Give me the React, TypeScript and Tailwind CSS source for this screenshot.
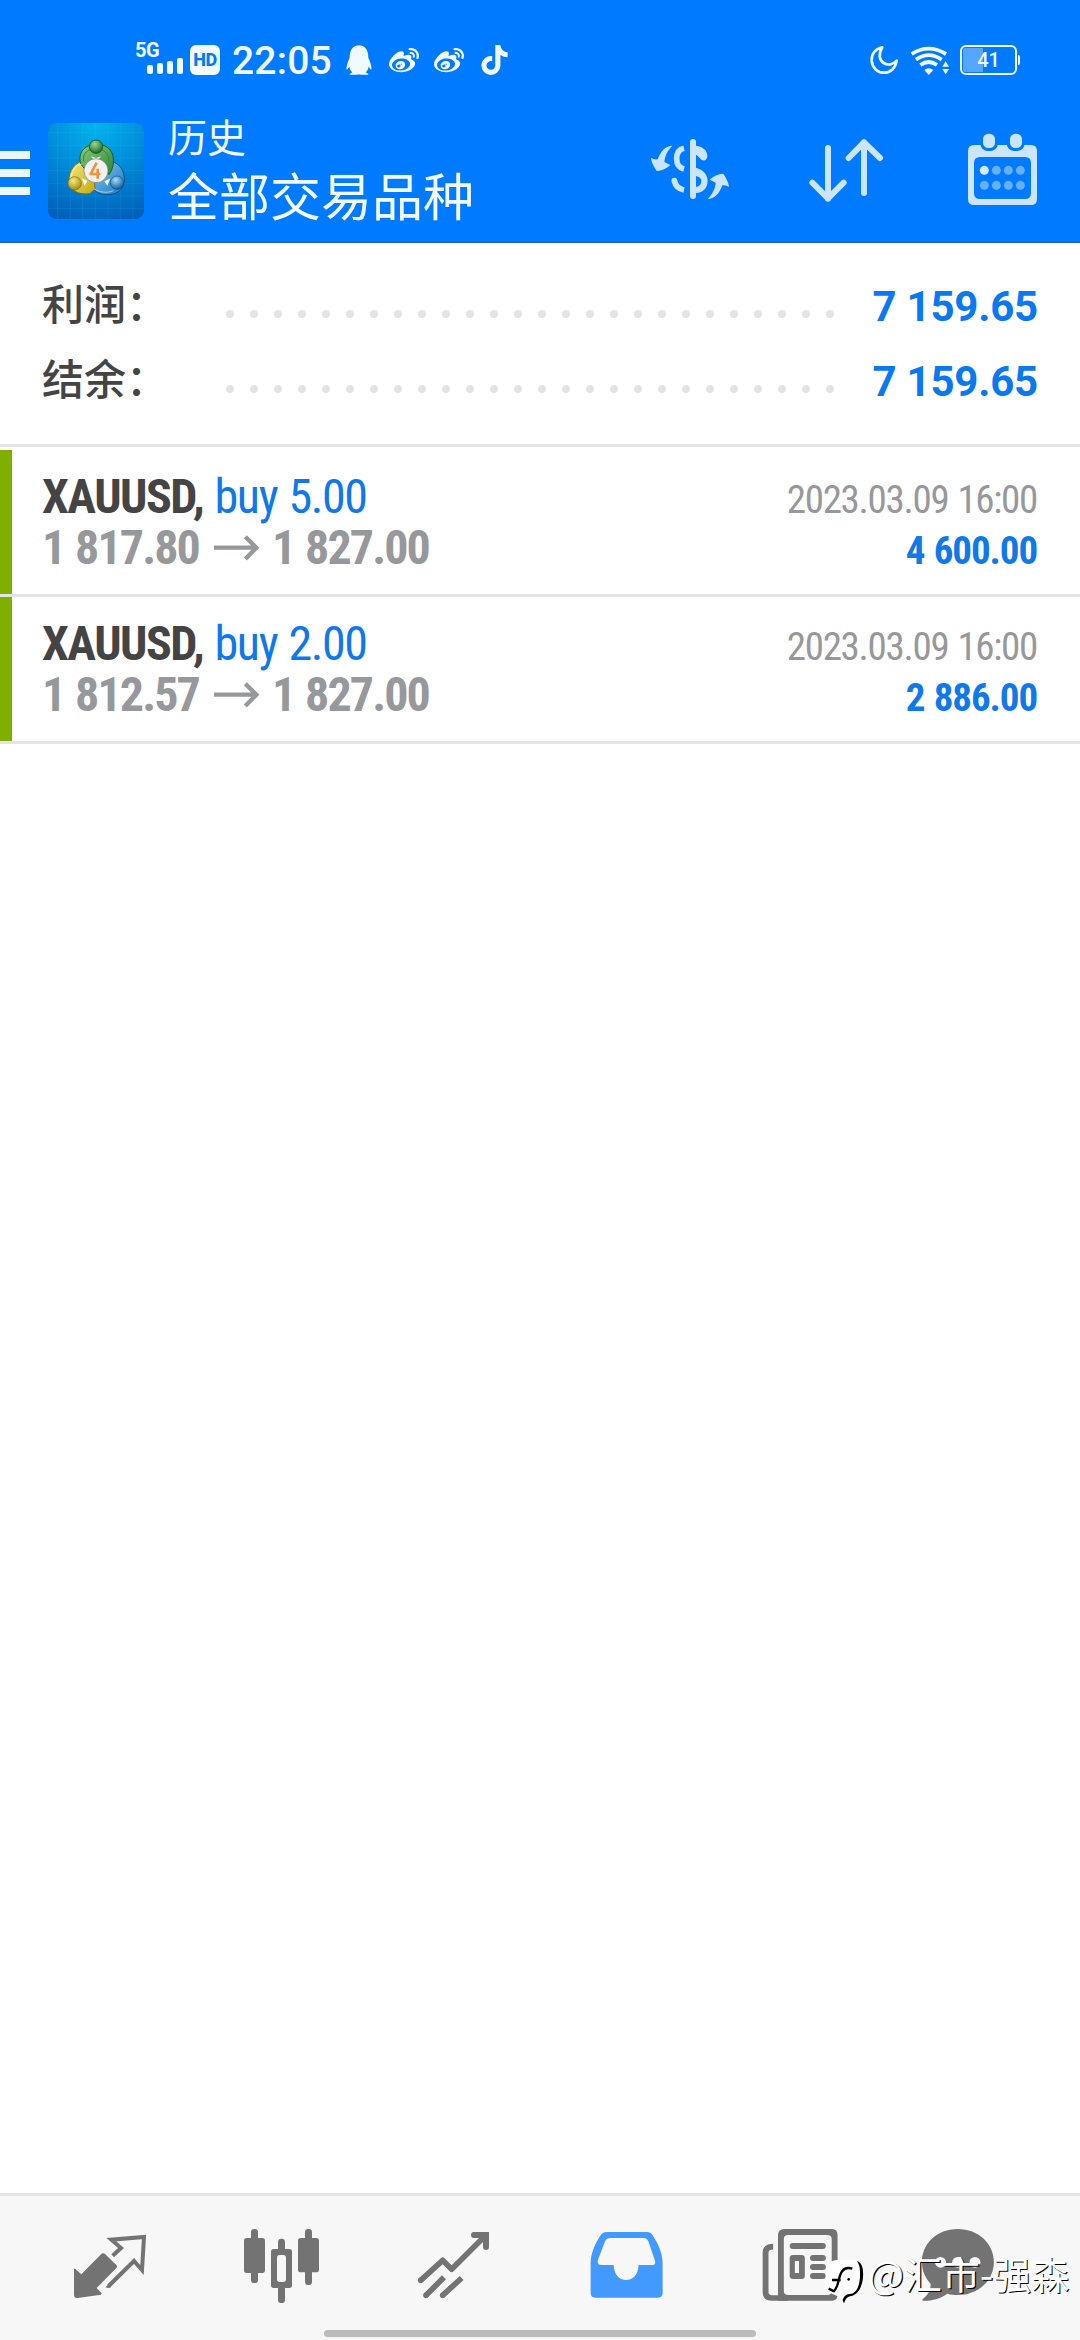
import type { ReactNode } from 'react';
import { FaQq, FaTiktok, FaWeibo } from 'react-icons/fa';

const CJK = "font-['Noto_Sans_CJK_SC',sans-serif]";
const CONDENSED = "font-['Roboto_Condensed',Roboto,sans-serif]";

function StatusBar() {
  return (
    <div className="flex h-[102px] items-start pt-[42px] pr-[60px] pl-[135px] text-[#f0faff]">
      <div className="flex h-8 w-[48px] flex-col">
        <span className="text-[20px] leading-[16px] font-bold tracking-[-0.5px]">5G</span>
        <div className="flex h-4 items-end justify-end gap-[4px]">
          <i className="h-[9px] w-[6px] rounded-[2px] bg-[#f0faff]" />
          <i className="h-[11px] w-[6px] rounded-[2px] bg-[#f0faff]" />
          <i className="h-[13px] w-[6px] rounded-[2px] bg-[#f0faff]" />
          <i className="h-[16px] w-[6px] rounded-[2px] bg-[#f0faff]" />
        </div>
      </div>
      <span className="mt-[3px] ml-[7px] flex h-[30px] w-[30px] items-center justify-center rounded-[6px] bg-[#f0faff] text-[18px] leading-none font-extrabold tracking-[-0.5px] text-[#007aff]">
        HD
      </span>
      <span className="ml-[12px] w-[102px] text-[39px] leading-[38px] font-medium tracking-[0.2px] whitespace-nowrap">22:05</span>
      <FaQq className="mt-[3px] ml-[12px] h-[30px] w-[26px]" />
      <FaWeibo className="mt-[4px] ml-[17px] h-[30px] w-[30px]" />
      <FaWeibo className="mt-[4px] ml-[15px] h-[30px] w-[30px]" />
      <FaTiktok className="mt-[3px] ml-[17px] h-[30px] w-[27px]" />

      <svg className="mt-[3px] ml-auto h-[30px] w-[30px]" viewBox="90 75 90 90" fill="none" stroke="currentColor" strokeWidth="8" strokeLinejoin="round">
        <path d="M127 82 C105 87 94 103 95 122 C97 144 112 158 132 158 C152 158 167 144 170 122 C160 134 144 137 131 129 C117 120 115 101 127 82Z" />
      </svg>
      <svg className="mt-[3px] ml-[10px] h-[30px] w-[40px]" viewBox="208 75 120 90" fill="none" stroke="currentColor" strokeWidth="11.5">
        <path d="M213 102 Q264 70 316 102" />
        <path d="M226 119 Q264 92 303 119" />
        <path d="M239 135 Q264 117 289 135" />
        <path d="M251 150 Q264 140 278 150 L264 165Z" fill="currentColor" stroke="none" />
        <path d="M315 124 L325 140 H305Z M315 163 L325 147 H305Z" fill="currentColor" stroke="none" />
      </svg>
      <div className="mt-[3px] ml-[10px] flex items-center">
        <div className="relative flex h-[30px] w-[57px] items-center justify-center rounded-[6px] border-[2.5px] border-[#f0faff]">
          <i className="absolute top-[1px] bottom-[1px] left-[1px] w-[20px] rounded-l-[2px] bg-[#55a6ff]" />
          <span className="relative text-[20px] leading-none font-medium">41</span>
        </div>
        <i className="ml-px h-[10px] w-[2px] rounded-r bg-[#f0faff]" />
      </div>
    </div>
  );
}

function AppLogo() {
  return (
    <svg className="mt-[21px] ml-[18px] h-24 w-24 shrink-0" viewBox="12 15 288 288">
      <defs>
        <radialGradient id="sky" cx="0.5" cy="0" r="1.05">
          <stop offset="0" stopColor="#00b6ee" />
          <stop offset="0.45" stopColor="#0090dc" />
          <stop offset="1" stopColor="#0060ba" />
        </radialGradient>
        <linearGradient id="green" x1="0" y1="0" x2="1" y2="1">
          <stop offset="0" stopColor="#8ccc7c" />
          <stop offset="1" stopColor="#2a8536" />
        </linearGradient>
        <linearGradient id="gold" x1="0" y1="0" x2="1" y2="1">
          <stop offset="0" stopColor="#f3ec7c" />
          <stop offset="1" stopColor="#c4a813" />
        </linearGradient>
        <linearGradient id="azure" x1="0" y1="0" x2="1" y2="1">
          <stop offset="0" stopColor="#8fcbf2" />
          <stop offset="1" stopColor="#1779c4" />
        </linearGradient>
        <radialGradient id="greenBall" cx="0.4" cy="0.3" r="0.7">
          <stop offset="0" stopColor="#9bd68c" />
          <stop offset="1" stopColor="#1d6f2c" />
        </radialGradient>
        <radialGradient id="goldBall" cx="0.4" cy="0.3" r="0.7">
          <stop offset="0" stopColor="#f5ea8a" />
          <stop offset="1" stopColor="#a98c0c" />
        </radialGradient>
        <radialGradient id="blueBall" cx="0.4" cy="0.3" r="0.7">
          <stop offset="0" stopColor="#a5dcfa" />
          <stop offset="1" stopColor="#125f9f" />
        </radialGradient>
      </defs>
      <rect x="12" y="15" width="288" height="288" rx="26" fill="url(#sky)" />
      <path
        d="M41 15V303M79 15V303M116 15V303M154 15V303M192 15V303M229 15V303M267 15V303M12 43H300M12 82H300M12 120H300M12 158H300M12 196H300M12 234H300M12 272H300"
        stroke="#4cc0f5"
        strokeOpacity="0.2"
        strokeWidth="2"
      />
      <path d="M191 128 C226 130 244 158 241 192 C238 218 214 231 187 230 C165 229 148 218 137 200 L170 150Z" fill="url(#azure)" stroke="#0c5285" strokeWidth="3" />
      <path d="M128 127 C95 128 72 158 75 192 C80 219 104 231 137 227 L153 214 L150 150Z" fill="url(#gold)" stroke="#7b6c10" strokeWidth="3" />
      <path d="M121 151 C104 138 103 109 120 92 C142 73 178 74 197 94 C215 116 210 150 195 170 L170 150 L130 135Z" fill="url(#green)" stroke="#1a5f26" strokeWidth="3" />
      <path d="M119 130 C114 106 132 92 156 92 C180 92 195 108 195 130" fill="none" stroke="#2f8c3a" strokeWidth="3" />
      <path d="M82 180 C82 158 96 142 114 138 M150 212 C166 224 190 226 208 218" fill="none" stroke="#fff" strokeOpacity="0.5" strokeWidth="3" />
      <circle cx="156" cy="86" r="20" fill="url(#greenBall)" stroke="#1a5f26" strokeWidth="3" />
      <circle cx="92" cy="196" r="20" fill="url(#goldBall)" stroke="#7b6c10" strokeWidth="2" />
      <circle cx="219" cy="194" r="20" fill="url(#blueBall)" stroke="#0c5285" strokeWidth="2" />
      <path d="M113 181L130 188L122 203Z M199 181L181 190L190 203Z M141 115L156 120L171 115L164 124H148Z" fill="#fff" fillOpacity="0.9" />
      <circle cx="156" cy="158" r="36" fill="#f1f1f3" stroke="#777" strokeWidth="2" />
      <path d="M158 134 L140 168 H169 M161 152 V182" fill="none" stroke="#f3923a" strokeWidth="8" strokeLinejoin="round" />
    </svg>
  );
}

function Header() {
  return (
    <header className="h-[243px] border-b-2 border-[#1b6ac4] bg-[#007aff]">
      <StatusBar />
      <div className="flex items-start text-[#cbe5ff]">
        <div className="mt-[49px] flex w-[30px] flex-col gap-[10px]">
          <i className="h-2 bg-[#eaf7ff]" />
          <i className="h-2 bg-[#eaf7ff]" />
          <i className="h-2 bg-[#eaf7ff]" />
        </div>
        <AppLogo />
        <div className={`mt-[5px] ml-6 flex flex-col whitespace-nowrap text-[#f2fbff] ${CJK}`}>
          <span className="text-[39px] leading-[56px]">历史</span>
          <span className="text-[51px] leading-[63px]">全部交易品种</span>
        </div>
        <svg className="mt-[35px] mr-[78px] ml-auto h-16 w-20" viewBox="90 81 240 192" fill="none">
          <rect x="210" y="87" width="18" height="180" rx="9" fill="currentColor" />
          <path d="M192 115 C177 118 170 130 170 146 C170 162 177 173 192 177" stroke="currentColor" strokeWidth="17" />
          <path d="M163 212 C166 227 176 237 192 240" stroke="currentColor" strokeWidth="17" />
          <circle cx="163" cy="212" r="8.5" fill="currentColor" />
          <path d="M228 107 C247 109 261 120 262 137 C262 149 254 154 245 150 L228 133Z" fill="currentColor" />
          <path d="M228 173 C250 179 263 194 263 212 C263 233 249 248 228 249 V231 C239 229 244 223 244 213 C244 205 238 200 228 198Z" fill="currentColor" />
          <path id="swap" d="M157 107 C138 107 122 122 113 148 Q102 150 93 143 Q94 159 110 183 Q134 182 151 165 L133 156 C135 136 143 122 157 107Z" fill="currentColor" />
          <use href="#swap" transform="rotate(180 210 187)" />
        </svg>
        <svg className="mt-[35px] mr-[82px] h-[66px] w-[77px]" viewBox="564 81 231 198" fill="none" stroke="currentColor" strokeWidth="18" strokeLinecap="round" strokeLinejoin="round">
          <path d="M624 114V266M577 218L624 265L671 218" />
          <path d="M732 249V97M686 144L732 97L780 144" />
        </svg>
        <svg className="mt-[30px] mr-[42px] h-[74px] w-[71px]" viewBox="1041 66 213 222">
          <path
            fill="currentColor"
            fillRule="evenodd"
            d="M1062 105 H1082 C1084 118 1094 123 1107 123 S1131 118 1133 105 H1161 C1163 118 1174 123 1187 123 S1211 118 1213 105 H1233 Q1251 105 1251 123 V267 Q1251 285 1233 285 H1062 Q1044 285 1044 267 V123 Q1044 105 1062 105Z M1080 141 Q1062 141 1062 159 V249 Q1062 267 1080 267 H1215 Q1233 267 1233 249 V159 Q1233 141 1215 141Z"
          />
          <rect x="1089" y="71" width="36" height="43" rx="16" fill="currentColor" />
          <rect x="1170" y="71" width="36" height="43" rx="16" fill="currentColor" />
          <circle cx="1093" cy="181" r="13.5" fill="#d4eaff" />
          <g fill="#66afff">
            <circle cx="1129" cy="181" r="13.5" />
            <circle cx="1165" cy="181" r="13.5" />
            <circle cx="1201" cy="181" r="13.5" />
            <circle cx="1093" cy="226" r="13.5" />
            <circle cx="1129" cy="226" r="13.5" />
            <circle cx="1165" cy="226" r="13.5" />
            <circle cx="1201" cy="226" r="13.5" />
          </g>
        </svg>
      </div>
    </header>
  );
}

function SummaryRow({ label, value }: { label: string; value: string }) {
  return (
    <div className="flex h-[75px] items-baseline">
      <span className={`w-[184px] -translate-y-[1px] text-[42px] leading-[60px] font-medium text-[#444] ${CJK}`}>{label}</span>
      <span className="flex gap-4">
        {Array.from({ length: 26 }, (_, i) => (
          <i key={i} className="h-2 w-2 -translate-y-[3px] rounded-full bg-[#e4e4e4]" />
        ))}
      </span>
      <span className="ml-auto text-[42px] leading-[60px] font-bold tracking-[-0.2px] text-[#0a78f0]">{value}</span>
    </div>
  );
}

type Deal = { symbol: string; action: string; open: string; close: string; time: string; profit: string };

const deals: Deal[] = [
  { symbol: 'XAUUSD,', action: 'buy 5.00', open: '1 817.80', close: '1 827.00', time: '2023.03.09 16:00', profit: '4 600.00' },
  { symbol: 'XAUUSD,', action: 'buy 2.00', open: '1 812.57', close: '1 827.00', time: '2023.03.09 16:00', profit: '2 886.00' },
];

function DealRow({ deal }: { deal: Deal }) {
  return (
    <li className="flex h-[147px] border-b-[3px] border-[#e4e4e4]">
      <i className="w-3 bg-[#7fb000]" />
      <div className={`flex flex-1 justify-between pr-[43px] pl-[30px] whitespace-nowrap ${CONDENSED}`}>
        <div className="pt-[21px] text-[48px] leading-[51px] tracking-[-1.4px] [word-spacing:1.6px]">
          <div>
            <span className="font-bold tracking-[-1.5px] text-[#444]">{deal.symbol}</span> <span className="text-[#0f78ea]">{deal.action}</span>
          </div>
          <div className="flex items-center font-bold tracking-[-1.9px] text-[#97989b]">
            {deal.open}
            <svg className="mr-[12px] ml-[15px] h-[26px] w-[46px]" viewBox="641 278 138 78" fill="none" stroke="currentColor" strokeWidth="13">
              <path d="M641 316H766M735 283L768 316L735 350" />
            </svg>
            {deal.close}
          </div>
        </div>
        <div className="pt-[25px] text-right text-[39px] leading-[51px] tracking-[-1.3px] [word-spacing:1.4px]">
          <div className="text-[#97989b]">{deal.time}</div>
          <div className="font-bold tracking-[-1.1px] text-[#0f78ea]">{deal.profit}</div>
        </div>
      </div>
    </li>
  );
}

function Tab({ viewBox, children }: { viewBox: string; children: ReactNode }) {
  return (
    <a className="flex flex-1 justify-center text-[#737373]">
      <svg className="h-[84px] w-[90px] overflow-visible" viewBox={viewBox} preserveAspectRatio="none" fill="none">
        {children}
      </svg>
    </a>
  );
}

function TabBar() {
  return (
    <nav className="relative flex h-[147px] border-t-[3px] border-[#e4e4e4] bg-[#f7f7f7] px-6 pt-[29px]">
      <Tab viewBox="195 135 270 252">
        <path d="M222 266 L226 267 L244 283 L304 222 Q309 217 315 222 L349 255 Q353 260 349 264 L290 324 L305 340 L303 344 L233 354 Q222 354 222 344Z" fill="currentColor" />
        <path d="M338 227 L363 204 L334 179 L432 171 L426 270 L402 243 L326 318" stroke="currentColor" strokeWidth="12" />
        <path d="M316 322 L324 314 L334 320 Q330 324 325 324Z" fill="currentColor" />
      </Tab>
      <Tab viewBox="711 135 270 252">
        <g fill="currentColor">
          <rect x="753" y="147" width="21" height="162" rx="10" />
          <rect x="732" y="174" width="63" height="105" rx="8" />
          <rect x="915" y="147" width="21" height="168" rx="10" />
          <rect x="894" y="174" width="63" height="103" rx="8" />
          <rect x="834" y="176" width="21" height="60" rx="10" />
          <rect x="834" y="300" width="21" height="69" rx="10" />
          <rect x="813" y="207" width="63" height="117" rx="8" />
        </g>
        <rect x="831" y="225" width="27" height="81" rx="8" fill="#f7f7f7" />
      </Tab>
      <Tab viewBox="1227 135 270 252">
        <g stroke="currentColor" strokeWidth="17">
          <path d="M1262 301 L1328 241 L1355 268 L1458 165" strokeLinejoin="round" />
          <path d="M1422 165 H1458 V201" strokeLinecap="round" strokeWidth="18" />
          <path d="M1278 346 L1332 292 M1328 346 L1385 294" />
        </g>
        <g fill="currentColor">
          <circle cx="1262" cy="301" r="8.5" />
          <circle cx="1278" cy="346" r="8.5" />
          <circle cx="1328" cy="346" r="8.5" />
        </g>
      </Tab>
      <Tab viewBox="119 135 261.3 252">
        <path
          fill="#429aff"
          fillRule="evenodd"
          d="M193 156 H311 Q322 156 328 167 C345 194 356 222 356 250 V339 Q356 353 342 353 H161 Q147 353 147 339 V250 C147 222 158 194 175 167 Q182 156 193 156Z M205 174 Q193 174 189 184 L168 240 Q165 255 178 255 H214 C214 283 230 300 250 300 S286 283 286 255 H324 Q337 255 334 242 L315 185 Q311 174 300 174Z"
        />
      </Tab>
      <Tab viewBox="618.5 135 261.3 252">
        <path d="M677 200 Q655 200 655 218 V336 Q655 354 673 354 H720" stroke="currentColor" strokeWidth="17" />
        <path d="M691 354 V167 Q691 147 709 147 H848 Q864 147 864 165 V345 Q864 362 848 362 H691Z M721 165 Q708 165 708 177 V332 Q708 345 721 345 H834 Q847 345 847 332 V177 Q847 165 834 165Z" fill="currentColor" fillRule="evenodd" />
        <rect x="725" y="189" width="105" height="18" rx="9" fill="currentColor" />
        <path d="M735 225 H760 Q769 225 769 234 V288 Q769 297 760 297 H735 Q725 297 725 288 V234 Q725 225 735 225Z M740 243 V279 H752 V243Z" fill="currentColor" fillRule="evenodd" />
        <rect x="784" y="225" width="46" height="18" rx="9" fill="currentColor" />
        <rect x="784" y="252" width="46" height="18" rx="9" fill="currentColor" />
        <rect x="784" y="279" width="46" height="18" rx="9" fill="currentColor" />
      </Tab>
      <Tab viewBox="1118 135 261.3 252">
        <path d="M1213 147 C1273 147 1318 191 1318 246 C1318 302 1273 345 1213 345 C1203 345 1192 344 1183 341 C1160 357 1136 363 1113 362 Q1107 361 1112 357 C1128 343 1136 328 1134 311 C1118 293 1109 271 1109 246 C1109 191 1153 147 1213 147Z" fill="currentColor" />
        <g fill="#f7f7f7">
          <circle cx="1163" cy="247" r="16" />
          <circle cx="1213" cy="247" r="16" />
          <circle cx="1263" cy="247" r="16" />
        </g>
      </Tab>
      <i className="absolute bottom-[3px] left-[324px] h-[7px] w-[432px] rounded-full bg-[#bbb]" />
      <div className="absolute top-[63px] left-[825px] flex items-start">
        <svg className="h-[45px] w-[41px] overflow-visible" viewBox="15 117 123 135">
          <path d="M112 124 C126 128 131 146 129 172 C127 206 108 228 90 229 C82 230 76 238 72 250 L66 238 L74 222 L108 210 L118 176Z" fill="#000" />
          <path d="M50 120 H98 C116 121 121 138 120 164 C120 196 110 222 88 222 C76 224 70 232 67 243 C63 236 62 228 50 227 L24 216 C15 206 14 190 17 170 C18 140 24 122 50 120Z" fill="#fff" />
          <path d="M36 180 H62 M97 146 C78 140 66 148 60 166 C54 186 54 200 42 214 L26 206" fill="none" stroke="#000" strokeWidth="7" />
          <circle cx="86" cy="178" r="4" fill="#000" />
        </svg>
        <span className={`-mt-[7px] ml-[2px] text-[38px] leading-[42px] font-normal whitespace-nowrap text-white [text-shadow:1.2px_1.2px_0_#000] ${CJK}`}>@汇市-强森</span>
      </div>
    </nav>
  );
}

export default function App() {
  return (
    <div className="flex h-[2340px] w-[1080px] flex-col overflow-hidden bg-white font-['Roboto',sans-serif]">
      <Header />
      <section className="h-[204px] border-b-[3px] border-[#e4e4e4] px-[42px] pt-[30px]">
        <SummaryRow label="利润：" value="7 159.65" />
        <SummaryRow label="结余：" value="7 159.65" />
      </section>
      <ul className="flex-1 pt-[3px]">
        {deals.map((deal) => (
          <DealRow key={deal.open} deal={deal} />
        ))}
      </ul>
      <TabBar />
    </div>
  );
}
